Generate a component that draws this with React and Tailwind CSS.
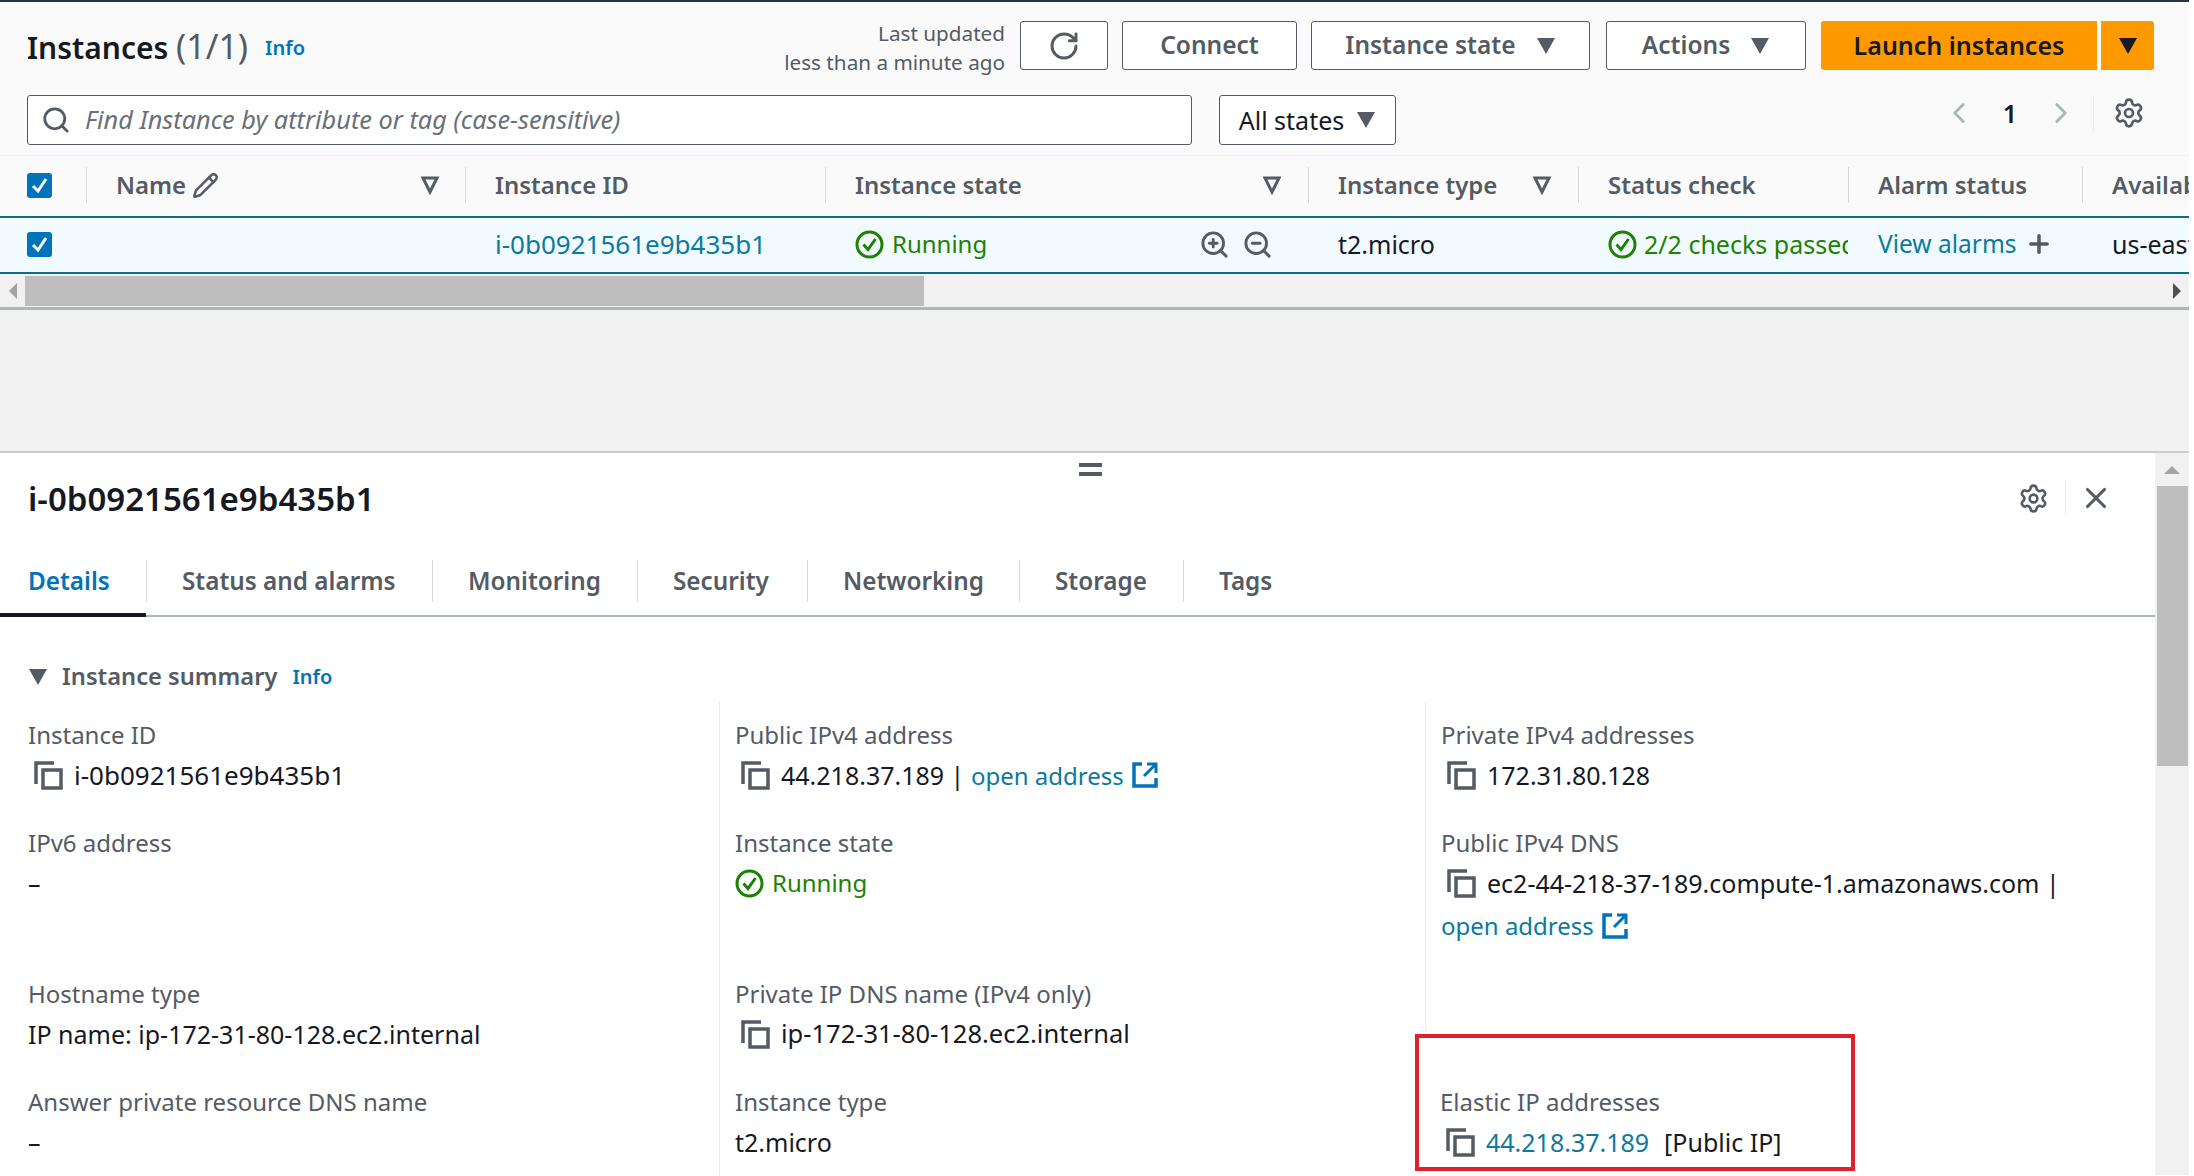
import { ZoomIn, ZoomOut, Settings, X, Search, RotateCw, Plus, ChevronLeft, ChevronRight, Pencil } from 'lucide-react';

const Caret = ({ color = '#545b64' }) => (
  <svg width="20" height="18" viewBox="0 0 20 18"><polygon points="1,1 19,1 10,17" fill={color} /></svg>
);

const FilterCaret = () => (
  <svg width="20" height="20" viewBox="0 0 20 20"><polygon points="3,3 17,3 10,17" fill="none" stroke="#545b64" strokeWidth="3" /></svg>
);

const CheckBox = () => (
  <span className="w-[25px] h-[25px] rounded-[3px] bg-[#0073bb] flex items-center justify-center">
    <svg width="19" height="19" viewBox="0 0 19 19"><path d="M3 10 L8 15 L16 3" fill="none" stroke="#fff" strokeWidth="3" /></svg>
  </span>
);

const StatusOk = () => (
  <svg className="shrink-0" width="29" height="29" viewBox="0 0 29 29">
    <circle cx="14.5" cy="14.5" r="12.5" fill="none" stroke="#1d8102" strokeWidth="3" />
    <path d="M8.5 14.5 L13 19.5 L20.5 9" fill="none" stroke="#1d8102" strokeWidth="3" />
  </svg>
);

const Copy = () => (
  <svg className="shrink-0" width="29" height="29" viewBox="0 0 29 29">
    <path d="M2 23 V2 H20" fill="none" stroke="#545b64" strokeWidth="3.5" />
    <rect x="9" y="9" width="18" height="18" fill="none" stroke="#545b64" strokeWidth="3.5" />
  </svg>
);

const External = () => (
  <svg className="shrink-0 -ml-[3px]" width="26" height="26" viewBox="0 0 26 26">
    <path d="M10 2 H2 V24 H24 V16" fill="none" stroke="#0073bb" strokeWidth="3.5" />
    <path d="M15 2 H24 V11 M24 2 L12 14" fill="none" stroke="#0073bb" strokeWidth="3" />
  </svg>
);

const OutlineButton = ({ className, children }) => (
  <div className={`h-[49px] bg-white border border-[#545b64] rounded-[3px] flex items-center justify-center gap-[20px] text-[#545b64] text-[24.5px] font-semibold ${className}`}>
    {children}
  </div>
);

const HeadCell = ({ className, children }) => (
  <div className={`h-[36px] border-l border-[#d5dbdb] pl-[29px] flex items-center shrink-0 ${className}`}>{children}</div>
);

const Cell = ({ label, children, divider, first }) => (
  <div className={`${divider ? 'border-l border-[#eaeded]' : ''} ${first ? 'pl-[28px]' : 'pl-[15px]'}`}>
    <div className="h-[28px] flex items-center text-[24px] text-[#545b64]">{label}</div>
    <div className="mt-[12px] text-[#16191f]">{children}</div>
  </div>
);

const Value = ({ children, indent = true }) => (
  <div className={`h-[28px] flex items-center ${indent ? 'pl-[6px] gap-[11px]' : ''}`}>{children}</div>
);

const linkCls = 'text-[#0b7a9e]';

export default function App() {
  return (
    <div className="h-[1176px] w-[2194px] overflow-hidden bg-white text-[25px] leading-none" style={{ fontFamily: '"Noto Sans", sans-serif' }}>
      <div className="w-[2189px] border-t-2 border-[#2b3240] bg-[#f2f2f2]">
        <div className="bg-[#fafafa] pl-[27px] pr-[35px] pt-[19px] pb-[10px]">
          <div className="flex items-center">
            <h1 className="text-[30px] font-semibold text-[#16191f]">Instances <span className="text-[34px] font-normal text-[#545b64]">(1/1)</span></h1>
            <span className="ml-[17px] mt-[4px] text-[#0073bb] text-[20px] font-semibold">Info</span>
            <div className="ml-auto -mt-[2px] -mb-[7px] text-right text-[20.7px] text-[#545b64] leading-[29px] mr-[15px]">
              <div>Last updated</div>
              <div>less than a minute ago</div>
            </div>
            <OutlineButton className="w-[88px] mr-[14px]"><RotateCw size={32} strokeWidth={2.2} /></OutlineButton>
            <OutlineButton className="w-[175px] mr-[14px]">Connect</OutlineButton>
            <OutlineButton className="w-[279px] mr-[16px]">Instance state <Caret /></OutlineButton>
            <OutlineButton className="w-[200px] mr-[15px]">Actions <Caret /></OutlineButton>
            <div className="w-[276px] h-[49px] mr-[4px] rounded-l-[3px] bg-[#ff9900] flex items-center justify-center font-semibold text-[#16191f]">Launch instances</div>
            <div className="w-[53px] h-[49px] rounded-r-[3px] bg-[#ff9900] flex items-center justify-center"><Caret color="#16191f" /></div>
          </div>
          <div className="flex items-center mt-[25px]">
            <div className="w-[1165px] h-[50px] bg-white border border-[#545b64] rounded-[3px] flex items-center pl-[13px] gap-[14px]">
              <Search size={30} className="text-[#545b64]" strokeWidth={2.2} />
              <span className="italic text-[25.3px] text-[#687078]">Find Instance by attribute or tag (case-sensitive)</span>
            </div>
            <div className="ml-[27px] w-[177px] h-[50px] bg-white border border-[#545b64] rounded-[3px] flex items-center justify-center gap-[12px] text-[#16191f]">All states <Caret /></div>
            <div className="ml-auto mb-[14px] flex items-center text-[#aab7b8]">
              <div className="w-[40px] flex justify-center"><ChevronLeft size={34} strokeWidth={2} /></div>
              <div className="w-[40px] mx-[11px] text-center font-semibold text-[#16191f]">1</div>
              <div className="w-[40px] flex justify-center"><ChevronRight size={34} strokeWidth={2} /></div>
              <div className="w-[61px] ml-[12px] h-[36px] border-l border-[#eaeded] flex justify-end pr-[9px] items-center text-[#545b64]"><Settings size={32} strokeWidth={2} /></div>
            </div>
          </div>
        </div>

        <div className="h-[61px] pb-[2px] bg-[#fafafa] flex items-center text-[24px] text-[#545b64] font-semibold whitespace-nowrap overflow-hidden border-t border-[#f2f2f2]">
          <div className="w-[86px] pl-[27px] shrink-0 flex"><CheckBox /></div>
          <HeadCell className="w-[379px] gap-[6px]">
            Name <Pencil size={27} strokeWidth={2.2} />
            <span className="ml-auto mr-[25px]"><FilterCaret /></span>
          </HeadCell>
          <HeadCell className="w-[360px]">Instance ID</HeadCell>
          <HeadCell className="w-[483px]">
            Instance state
            <span className="ml-auto mr-[26px]"><FilterCaret /></span>
          </HeadCell>
          <HeadCell className="w-[270px]">
            Instance type
            <span className="ml-auto mr-[26px]"><FilterCaret /></span>
          </HeadCell>
          <HeadCell className="w-[270px]">Status check</HeadCell>
          <HeadCell className="w-[234px]">Alarm status</HeadCell>
          <HeadCell className="w-[107px]">Availability Zone</HeadCell>
        </div>

        <div className="h-[58px] pb-[2px] bg-[#f1faff] border-y-2 border-[#0f6d82] flex items-center text-[#16191f] whitespace-nowrap overflow-hidden">
          <div className="w-[86px] pl-[27px] shrink-0 flex"><CheckBox /></div>
          <div className="w-[379px] shrink-0" />
          <div className={`w-[360px] pl-[30px] shrink-0 text-[26px] ${linkCls}`}>i-0b0921561e9b435b1</div>
          <div className="w-[483px] pl-[30px] shrink-0 flex items-center text-[24px] text-[#1d8102] gap-[8px]">
            <StatusOk /> Running
            <span className="ml-auto flex gap-[12px] mr-[35px] text-[#545b64]">
              <ZoomIn size={31} strokeWidth={2.2} />
              <ZoomOut size={31} strokeWidth={2.2} />
            </span>
          </div>
          <div className="w-[270px] pl-[30px] shrink-0">t2.micro</div>
          <div className="w-[270px] pl-[30px] shrink-0 flex items-center gap-[7px] text-[#1d8102] overflow-hidden">
            <StatusOk /> 2/2 checks passed
          </div>
          <div className="w-[234px] pl-[30px] shrink-0 flex items-center gap-[8px] text-[24.5px]">
            <span className={linkCls}>View alarms</span>
            <Plus size={28} strokeWidth={3} className="text-[#545b64]" />
          </div>
          <div className="w-[107px] pl-[30px] shrink-0 overflow-hidden">us-east-1a</div>
        </div>

        <div className="h-[36px] bg-[#f1f1f1] pt-[1px] border-b-[3px] border-[#aab7b8] flex items-center">
          <div className="w-[25px] flex justify-center">
            <svg width="10" height="16" viewBox="0 0 10 16"><polygon points="9,0 9,16 1,8" fill="#a3a3a3" /></svg>
          </div>
          <div className="w-[899px] h-[30px] bg-[#bdbdbd]" />
          <div className="ml-auto mr-[7px]">
            <svg width="10" height="16" viewBox="0 0 10 16"><polygon points="1,0 1,16 9,8" fill="#505050" /></svg>
          </div>
        </div>

        <div className="h-[141px]" />

        <div className="h-[724px] bg-white border-t-2 border-[#c8cccc] flex relative">
          <div className="flex-1 min-w-0">
            <div className="h-[10px] flex justify-center pt-[10px] relative">
              <div className="w-[23px] h-[13px] border-y-[4px] border-[#545b64] ml-[26px]" />
            </div>
            <div className="flex items-center h-[58px] mt-[6px] pl-[28px] pr-[42px]">
              <h2 className="text-[33px] font-semibold text-[#16191f]">i-0b0921561e9b435b1</h2>
              <div className="ml-auto flex items-center text-[#545b64]">
                <Settings size={31} strokeWidth={2} className="mr-[16px]" />
                <div className="h-[36px] border-l border-[#eaeded] pl-[13px] flex items-center"><X size={34} strokeWidth={2.2} /></div>
              </div>
            </div>
            <div className="mt-[31px] h-[59px] border-b-2 border-[#aab7b8] flex text-[24.3px] text-[#545b64] font-semibold whitespace-nowrap">
              <div className="w-[146px] h-[59px] pl-[28px] pb-[9px] flex items-center text-[#0073bb] border-b-[4px] border-[#16191f]">Details</div>
              {[
                ['Status and alarms', 'w-[286px]'],
                ['Monitoring', 'w-[205px]'],
                ['Security', 'w-[170px]'],
                ['Networking', 'w-[212px]'],
                ['Storage', 'w-[164px]'],
                ['Tags', 'w-[120px]'],
              ].map(([name, w]) => (
                <div key={name} className={`${w} h-[42px] mt-[2px] border-l border-[#d5dbdb] pl-[35px] flex items-center`}>{name}</div>
              ))}
            </div>

            <div className="mt-[46px] pl-[28px] h-[28px] flex items-center text-[23.7px] text-[#545b64] font-semibold">
              <Caret />
              <span className="ml-[14px]">Instance summary</span>
              <span className="ml-[15px] text-[20px] text-[#0073bb]">Info</span>
            </div>

            <div className="mt-[11px] grid grid-cols-[719px_706px_1fr] grid-rows-[127px_151px_108px_90px] whitespace-nowrap">
              <div className="pt-[19px]"><Cell first label="Instance ID"><Value><Copy /> <span className="text-[26px]">i-0b0921561e9b435b1</span></Value></Cell></div>
              <div className="pt-[19px] border-l border-[#eaeded]"><Cell label="Public IPv4 address"><Value><Copy /><span>44.218.37.189 | <span className={`text-[24px] ${linkCls}`}>open address</span></span><External /></Value></Cell></div>
              <div className="pt-[19px] border-l border-[#eaeded]"><Cell label="Private IPv4 addresses"><Value><Copy /> 172.31.80.128</Value></Cell></div>

              <div><Cell first label="IPv6 address"><Value indent={false}>–</Value></Cell></div>
              <div className="border-l border-[#eaeded]"><Cell label="Instance state"><Value indent={false}><span className="flex items-center gap-[8px] text-[24px] text-[#1d8102]"><StatusOk /> Running</span></Value></Cell></div>
              <div className="border-l border-[#eaeded]">
                <Cell label="Public IPv4 DNS"><Value><Copy /> ec2-44-218-37-189.compute-1.amazonaws.com |</Value></Cell>
                <div className="pl-[15px] mt-[15px] h-[28px] flex items-center gap-[11px]"><span className={`text-[24px] ${linkCls}`}>open address</span><External /></div>
              </div>

              <div><Cell first label="Hostname type"><Value indent={false}>IP name: ip-172-31-80-128.ec2.internal</Value></Cell></div>
              <div className="border-l border-[#eaeded]"><Cell label="Private IP DNS name (IPv4 only)"><Value><Copy /> <span className="text-[25.5px]">ip-172-31-80-128.ec2.internal</span></Value></Cell></div>
              <div className="h-[52px] border-l border-[#eaeded]" />

              <div><Cell first label="Answer private resource DNS name"><Value indent={false}>–</Value></Cell></div>
              <div className="border-l border-[#eaeded]"><Cell label="Instance type"><Value indent={false}>t2.micro</Value></Cell></div>
              <div className="pl-[15px]">
                <div className="h-[28px] flex items-center text-[24px] text-[#545b64]">Elastic IP addresses</div>
                <div className="mt-[12px] text-[#16191f]"><Value><Copy /><span className={linkCls}>44.218.37.189</span><span className="ml-[4px]">[Public IP]</span></Value></div>
              </div>
            </div>
          </div>

          <div className="w-[34px] shrink-0 bg-[#f1f1f1] flex flex-col items-center">
            <div className="h-[33px] flex items-center justify-center">
              <svg width="16" height="10" viewBox="0 0 16 10"><polygon points="0,9 16,9 8,1" fill="#a3a3a3" /></svg>
            </div>
            <div className="w-[31px] h-[280px] bg-[#bdbdbd]" />
          </div>

          {/* annotation drawn over the screenshot */}
          <div className="absolute left-[1415px] top-[581px] w-[440px] h-[137px] border-[4px] border-[#e21f2d]" />
        </div>
      </div>
    </div>
  );
}
